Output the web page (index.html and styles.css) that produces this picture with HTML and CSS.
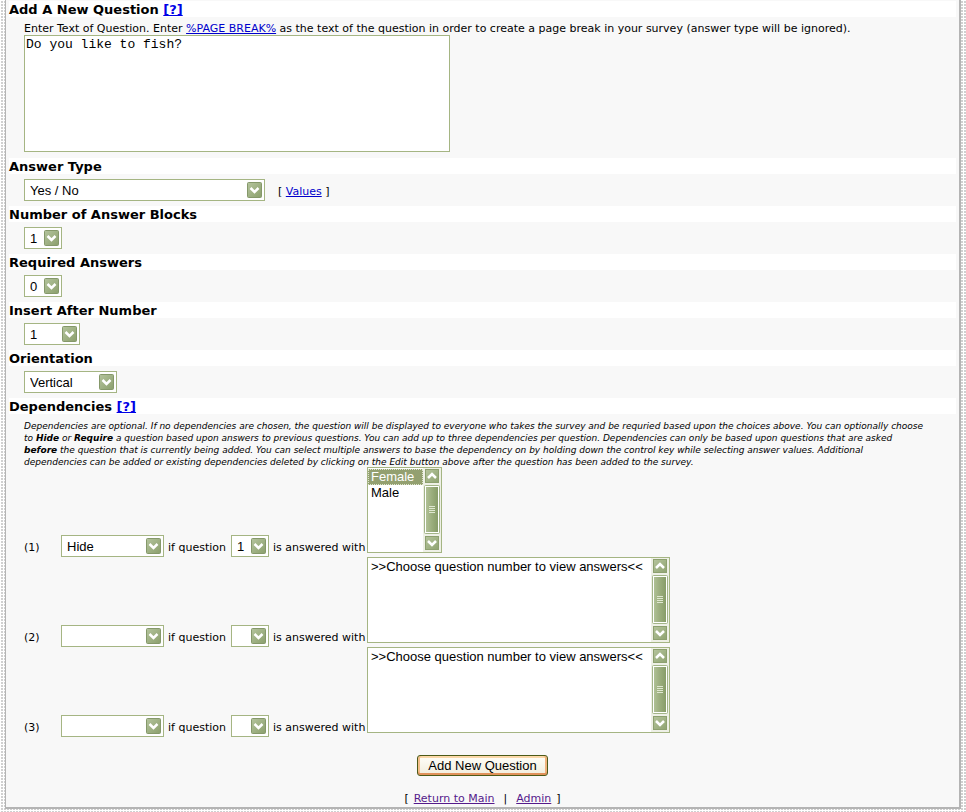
FILE: index.html
```html
<!DOCTYPE html>
<html lang="en">
<head>
<meta charset="utf-8">
<title>Add A New Question</title>
<link rel="stylesheet" href="styles.css">
</head>
<body>
<svg class="symbols" aria-hidden="true">
  <defs>
    <linearGradient id="thumb" x1="0" x2="1" y1="0" y2="0"><stop offset="0" stop-color="#b0c095"/><stop offset=".5" stop-color="#9aad7c"/><stop offset="1" stop-color="#879c68"/></linearGradient>
    <linearGradient id="cap" x1="0" x2="1" y1="0" y2="1"><stop offset="0" stop-color="#b5c49c"/><stop offset="1" stop-color="#8fa371"/></linearGradient>
    <symbol id="scrollbar" viewBox="0 0 18 84">
      <path fill="#eef0e6" d="M0 0h18v84H0z"/>
      <g fill="url(#cap)" stroke="#8da06f"><rect x="2.500" y="1.500" width="13" height="13"/><rect x="2.500" y="68.500" width="13" height="13"/></g>
      <rect x="1.500" y="17.500" width="15" height="48" rx="1" fill="#fff" stroke="#a3b588"/>
      <rect x="3" y="19" width="12" height="45" fill="url(#thumb)"/>
      <path stroke="#dfe7d0" d="M6 38.500h6M6 40.500h6M6 42.500h6M6 44.500h6"/>
      <path fill="none" stroke="#fff" stroke-width="2.500" d="M5 10l4-4 4 4M5 73l4 4 4-4"/>
    </symbol>
  </defs>
</svg>
<form class="panel">
  <h2><label for="question">Add A New Question</label> <a href="#help">[?]</a></h2>
  <div class="row question">
    <p class="hint">Enter Text of Question. Enter <a href="#break">%PAGE BREAK%</a> as the text of the question in order to create a page break in your survey (answer type will be ignored).</p>
    <textarea id="question">Do you like to fish?</textarea>
  </div>
  <h2><label for="type">Answer Type</label></h2>
  <div class="row"><select id="type" class="w-type"><option>Yes / No</option></select><span class="values">[ <a href="#values">Values</a> ]</span></div>
  <h2><label for="blocks">Number of Answer Blocks</label></h2>
  <div class="row"><select id="blocks" class="w-num"><option>1</option></select></div>
  <h2><label for="required">Required Answers</label></h2>
  <div class="row"><select id="required" class="w-num"><option>0</option></select></div>
  <h2><label for="after">Insert After Number</label></h2>
  <div class="row"><select id="after" class="w-after"><option>1</option></select></div>
  <h2><label for="orient">Orientation</label></h2>
  <div class="row"><select id="orient" class="w-orient"><option>Vertical</option></select></div>
  <h2>Dependencies <a href="#dep-help">[?]</a></h2>
  <div class="row dependencies">
    <p class="note">Dependencies are optional. If no dependencies are chosen, the question will be displayed to everyone who takes the survey and be requried based upon the choices above. You can optionally choose<br>to <b>Hide</b> or <b>Require</b> a question based upon answers to previous questions. You can add up to three dependencies per question. Dependencies can only be based upon questions that are asked<br><b>before</b> the question that is currently being added. You can select multiple answers to base the dependency on by holding down the control key while selecting answer values. Additional<br>dependencies can be added or existing dependencies deleted by clicking on the Edit button above after the question has been added to the survey.</p>
    <div class="dep">
      <span class="index">(1)</span>
      <select class="w-mode" aria-label="Dependency 1 mode"><option>Hide</option></select>
      <label for="q1">if question</label>
      <select id="q1" class="w-num"><option>1</option></select>
      <label class="with" for="a1">is answered with</label>
      <div class="list"><select id="a1" class="w-short" multiple size="5"><option selected>Female</option><option>Male</option></select><svg class="scrollbar" aria-hidden="true"><use href="#scrollbar"/></svg></div>
    </div>
    <div class="dep">
      <span class="index">(2)</span>
      <select class="w-mode" aria-label="Dependency 2 mode"><option></option></select>
      <label for="q2">if question</label>
      <select id="q2" class="w-num"><option></option></select>
      <label class="with" for="a2">is answered with</label>
      <div class="list"><select id="a2" class="w-long" multiple size="5"><option>&gt;&gt;Choose question number to view answers&lt;&lt;</option></select><svg class="scrollbar" aria-hidden="true"><use href="#scrollbar"/></svg></div>
    </div>
    <div class="dep">
      <span class="index">(3)</span>
      <select class="w-mode" aria-label="Dependency 3 mode"><option></option></select>
      <label for="q3">if question</label>
      <select id="q3" class="w-num"><option></option></select>
      <label class="with" for="a3">is answered with</label>
      <div class="list"><select id="a3" class="w-long" multiple size="5"><option>&gt;&gt;Choose question number to view answers&lt;&lt;</option></select><svg class="scrollbar" aria-hidden="true"><use href="#scrollbar"/></svg></div>
    </div>
  </div>
  <div class="actions"><button type="button">Add New Question</button></div>
  <nav class="links"><span>[</span><a href="#main">Return to Main</a><span class="bar">|</span><a href="#admin">Admin</a><span>]</span></nav>
</form>
</body>
</html>
```
FILE: styles.css
```css
* { box-sizing: border-box; }

body {
  margin: 0;
  padding: 0 5px 4px;
  background-color: #fff;
  background-image:
    linear-gradient(90deg, #fff 1px, transparent 1px),
    linear-gradient(#fff 1px, #d0d0d0 1px);
  background-size: 3px 3px;
  font: 11px/12px Verdana, "DejaVu Sans", sans-serif;
  color: #000;
}

a { color: #0000cc; text-decoration-skip-ink: none; }

.symbols { position: absolute; width: 0; height: 0; }

.panel {
  padding: 1px 3px 0;
  border: solid #b4b4b4;
  border-width: 0 2px 2px 1px;
  background: #f8f8f8;
}

h2 {
  margin: 0;
  height: 16px;
  font-size: 13px;
  line-height: 18px;
  background: #fff;
}

h2 a { color: #0000e6; }

.row {
  display: flex;
  align-items: center;
  padding: 5px 0 5px 15px;
}

.question {
  flex-direction: column;
  align-items: flex-start;
  padding-bottom: 6px;
}

p { margin: 0; }

.hint { line-height: 13px; }

textarea {
  width: 426px;
  height: 117px;
  padding: 1px;
  border: 1px solid #a5b583;
  background: #fff;
  font: 13px/16px "Liberation Mono", monospace;
  resize: none;
}

select {
  appearance: none;
  flex: none;
  height: 22px;
  padding: 1px 20px 0 5px;
  border: 1px solid #a5b583;
  border-radius: 0;
  font: 13px/16px "Liberation Sans", Arial, sans-serif;
  color: #000;
  background: #fff url("data:image/svg+xml,%3Csvg xmlns='http://www.w3.org/2000/svg' width='15' height='16'%3E%3ClinearGradient id='g' x2='1' y2='1'%3E%3Cstop stop-color='%23b4c49d'/%3E%3Cstop offset='1' stop-color='%238b9f6c'/%3E%3C/linearGradient%3E%3Crect x='.5' y='.5' width='14' height='15' rx='1' fill='url(%23g)' stroke='%2385986a'/%3E%3Cpath d='M3.500 6l4 4 4-4' fill='none' stroke='white' stroke-width='2.500'/%3E%3C/svg%3E") no-repeat right 2px center;
}

.w-type { width: 241px; }
.w-num { width: 38px; }
.w-after { width: 56px; }
.w-orient { width: 93px; }
.w-mode { width: 103px; }
.w-short { width: 55px; }
.w-long { width: 283px; }

.values { margin-left: 13px; padding-top: 3px; }

.dependencies { display: block; padding: 6px 0 0 15px; }

.note { margin-bottom: -1px; font-size: 9px; font-style: italic; white-space: nowrap; }

.dep {
  display: flex;
  align-items: flex-end;
  gap: 4px;
  margin-bottom: 4px;
}

.dep .index { width: 33px; }
.dep label { width: 59px; white-space: nowrap; }
.dep label, .dep .index { line-height: 10px; }
.dep .with { width: 90px; }
.dep > select { margin-bottom: -4px; }

.list {
  display: flex;
  height: 86px;
  border: 1px solid #a5b583;
  background: #fff;
}

.list select {
  height: 84px;
  padding: 1px 0 0;
  border: 0;
  background: #fff;
  overflow: hidden;
}

.list option {
  height: 16px;
  min-height: 16px;
  padding: 0 3px;
  line-height: 18px;
}

.list option:checked {
  background: linear-gradient(#93a070, #93a070);
  color: #fff;
  -webkit-text-fill-color: #fff;
  outline: 1px dotted #dfe5cf;
  outline-offset: -1px;
}

.scrollbar { width: 18px; height: 84px; }

.actions { padding-top: 18px; text-align: center; }

button {
  height: 21px;
  padding: 0 10px;
  border: 1px solid #4c5a18;
  border-radius: 3px;
  box-shadow: inset 0 -2px #e0915a, inset 2px 0 #f3bf8a, inset -2px 0 #f0b37c, inset 0 2px #fbd9a9;
  background: linear-gradient(#fffef8, #f1ecdc);
  font: 13px/16px "Liberation Sans", Arial, sans-serif;
  color: #000;
}

.links {
  display: flex;
  justify-content: center;
  gap: 5px;
  padding: 17px 0 2px;
}
.links a { color: #551a8b; }
.links .bar { padding: 0 4px; }
```
